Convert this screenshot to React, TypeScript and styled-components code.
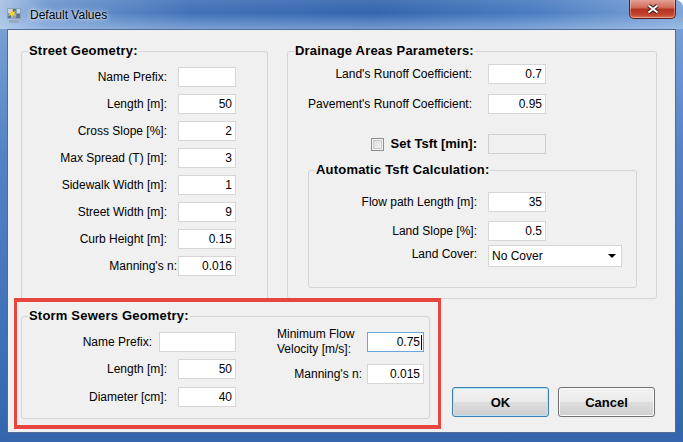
import React from "react";
import styled, { createGlobalStyle } from "styled-components";

const GlobalStyle = createGlobalStyle`
	html, body {
		margin: 0;
		padding: 0;
		background: #ffffff;
	}
	body {
		font-family: "Liberation Sans", Arial, sans-serif;
	}
`;

// window frame
const Window = styled.div`
	position: relative;
	width: 683px;
	height: 442px;
	overflow: hidden;
	display: flex;
	flex-direction: column;
	border-top-right-radius: 8px;
	background: linear-gradient(180deg, #7fa5d8 0%, #5383c4 35%, #3565ad 100%);
	font-family: "Liberation Sans", Arial, sans-serif;
	font-size: 12px;
	color: #000;
`;

const TitleBar = styled.div`
	height: 29px;
	display: flex;
	align-items: center;
	padding: 0 7px 0 6px;
	box-sizing: border-box;
	background: linear-gradient(
			180deg,
			rgba(255, 255, 255, 0.08) 0%,
			rgba(255, 255, 255, 0) 45%,
			rgba(190, 215, 245, 0.45) 100%
		),
		linear-gradient(90deg, #a9c3e4 0%, #6f98cf 7%, #4272b8 28%, #3466ae 55%, #4b7dc1 78%, #7ea4d6 100%);
`;

const TitleText = styled.span`
	margin-left: 8px;
	font-size: 12px;
	color: #000;
	text-shadow: 0 0 6px rgba(255, 255, 255, 0.95), 0 0 3px rgba(255, 255, 255, 0.8);
`;

const CloseButton = styled.div`
	margin-left: auto;
	align-self: flex-start;
	margin-top: -1px;
	width: 47px;
	height: 20px;
	box-sizing: border-box;
	display: flex;
	align-items: center;
	justify-content: center;
	border: 1px solid #5b201a;
	border-top: none;
	border-radius: 0 0 5px 5px;
	background: linear-gradient(180deg, #e6a89c 0%, #d0695a 45%, #b53220 55%, #c4452f 85%, #dd7a5e 100%);
	box-shadow: inset 0 0 0 1px rgba(255, 210, 200, 0.45);
`;

const Client = styled.div`
	margin: 0 7px;
	width: 669px;
	height: 404px;
	box-sizing: border-box;
	border: 1px solid #4d6d98;
	background: #f0f0f0;
	display: flex;
	flex-direction: column;
`;

// group boxes
const GroupBox = styled.fieldset<{ $w: number; $h: number }>`
	margin: 0;
	padding: 0;
	min-width: 0;
	width: ${(p) => p.$w}px;
	height: ${(p) => p.$h}px;
	box-sizing: border-box;
	border: 1px solid #d5d5d5;
	border-radius: 3px;
`;

const GroupTitle = styled.legend`
	margin-left: 6px;
	padding: 0 1px;
	font-size: 13px;
	font-weight: bold;
	letter-spacing: 0.2px;
	line-height: 14px;
`;

const TopRow = styled.div`
	display: flex;
	gap: 19px;
	padding: 14px 0 0 13px;
	align-items: flex-start;
`;

const BottomRow = styled.div`
	display: flex;
	align-items: flex-end;
	margin-top: 8px;
	padding-left: 13px;
`;

// fields
const FieldRow = styled.div<{ $gap: number; $mt?: number; $mr?: number }>`
	display: flex;
	align-items: center;
	justify-content: flex-end;
	gap: ${(p) => p.$gap}px;
	margin-top: ${(p) => p.$mt ?? 0}px;
	margin-right: ${(p) => p.$mr ?? 0}px;
	height: 20px;
`;

const Label = styled.span`
	white-space: nowrap;
	line-height: 14px;
`;

const BoldLabel = styled(Label)`
	font-size: 13px;
	font-weight: bold;
`;

const TextBox = styled.div<{ $w?: number; $focused?: boolean; $disabled?: boolean }>`
	width: ${(p) => p.$w ?? 58}px;
	height: 20px;
	box-sizing: border-box;
	display: flex;
	align-items: center;
	justify-content: flex-end;
	padding: 0 ${(p) => (p.$focused ? 1 : 3)}px 0 3px;
	border: 1px solid ${(p) => (p.$focused ? "#6aa4dc" : p.$disabled ? "#cfcfcf" : "#d6d6d6")};
	background: ${(p) => (p.$disabled ? "#f0f0f0" : "#ffffff")};
	white-space: nowrap;
`;

const Caret = styled.span`
	width: 1px;
	height: 15px;
	margin-left: 1px;
	background: #000;
`;

const CheckBox = styled.span`
	width: 13px;
	height: 13px;
	box-sizing: border-box;
	border: 1px solid #8e8f8f;
	background: linear-gradient(135deg, #dcdcdc 0%, #f4f4f4 100%);
	box-shadow: inset 0 0 0 1px #f4f4f4, inset 0 0 0 2px #c9c9c9;
`;

const CheckLabel = styled.label`
	display: flex;
	align-items: center;
	gap: 7px;
`;

const ControlCell = styled.div`
	width: 134px;
	display: flex;
`;

const DropDown = styled.div`
	width: 134px;
	height: 22px;
	box-sizing: border-box;
	display: flex;
	align-items: center;
	padding: 0 5px 0 3px;
	border: 1px solid #d6d6d6;
	background: #fff;
	margin-top: 3px;
`;

const DropText = styled.span`
	flex: 1;
`;

// street geometry
const StreetBody = styled.div`
	display: flex;
	flex-direction: column;
	gap: 7px;
	padding: 9px 31px 0 0;
`;

// drainage
const DrainageBody = styled.div`
	padding-top: 6px;
	display: flex;
	flex-direction: column;
`;

const AutoBox = styled(GroupBox)`
	margin: 9px 19px 0 20px;
`;

const AutoBody = styled.div`
	display: flex;
	flex-direction: column;
	padding: 15px 14px 0 0;
`;

// storm sewers
const StormBody = styled.div`
	display: flex;
	align-items: flex-start;
	padding-top: 4px;
`;

const StormLeft = styled.div`
	width: 214px;
	margin-top: 5px;
	display: flex;
	flex-direction: column;
	gap: 7px;
`;

const StormRight = styled.div`
	margin-left: 41px;
	display: grid;
	grid-template-columns: 85px 57px;
	align-content: start;
	column-gap: 5px;
	row-gap: 7px;
	align-items: center;
`;

const TwoLineLabel = styled.span`
	line-height: 15px;
	align-self: start;
`;

const RightLabel = styled(Label)`
	justify-self: end;
`;

const FocusCell = styled.div`
	align-self: start;
	margin-top: 5px;
`;

// buttons
const ButtonGroup = styled.div`
	display: flex;
	gap: 9px;
	margin: 0 0 2px 22px;
`;

const DialogButton = styled.button<{ $default?: boolean }>`
	width: 97px;
	height: 30px;
	padding: 0;
	border-radius: 3px;
	border: 1px solid ${(p) => (p.$default ? "#3c7fb1" : "#707070")};
	box-shadow: inset 0 0 0 1px ${(p) => (p.$default ? "#b9e3f7" : "#fbfbfb")};
	background: linear-gradient(180deg, #f2f2f2 0%, #ebebeb 48%, #dddddd 52%, #cfcfcf 100%);
	font-family: "Liberation Sans", Arial, sans-serif;
	font-size: 13px;
	font-weight: bold;
	color: #000;
`;

// annotation
const Highlight = styled.div`
	position: absolute;
	left: 14px;
	top: 298px;
	width: 427px;
	height: 131px;
	box-sizing: border-box;
	border-style: solid;
	border-color: #e8453e;
	border-width: 4px 3px;
	pointer-events: none;
`;

const AppIcon = () => (
	<svg width="16" height="18" viewBox="0 0 16 18">
		<rect x="1" y="2" width="14" height="11" fill="#8aa0bb" />
		<rect x="2" y="3" width="4" height="4" fill="#c9d6e6" />
		<rect x="7" y="3" width="3" height="4" fill="#5b7494" />
		<rect x="11" y="3" width="3" height="4" fill="#c9d6e6" />
		<rect x="2" y="8" width="3" height="4" fill="#5b7494" />
		<rect x="10" y="8" width="4" height="4" fill="#5b7494" />
		<path d="M6 2 L7 6 L10 5 L8 8 L11 10 L7 9 L6 13 L5 9 L2 10 L4 7 L2 5 L5 6 Z" fill="#f2d43a" />
		<rect x="3" y="14" width="10" height="3" fill="#9aa9bb" />
	</svg>
);

const CloseGlyph = () => (
	<svg width="14" height="10" viewBox="0 0 14 10">
		<path d="M2.5 1.5 L11.5 8.5 M11.5 1.5 L2.5 8.5" stroke="#3b1d18" strokeWidth="4" />
		<path d="M2.5 1.5 L11.5 8.5 M11.5 1.5 L2.5 8.5" stroke="#ffffff" strokeWidth="2" />
	</svg>
);

const Arrow = () => (
	<svg width="8" height="4" viewBox="0 0 8 4">
		<path d="M0 0 H8 L4 4 Z" fill="#000" />
	</svg>
);

const streetFields = [
	{ label: "Name Prefix:", value: "" },
	{ label: "Length [m]:", value: "50" },
	{ label: "Cross Slope [%]:", value: "2" },
	{ label: "Max Spread (T) [m]:", value: "3" },
	{ label: "Sidewalk Width [m]:", value: "1" },
	{ label: "Street Width [m]:", value: "9" },
	{ label: "Curb Height [m]:", value: "0.15" },
	{ label: "Manning's n:", value: "0.016", gap: 1 },
];

const App = (): JSX.Element => {
	return (
		<>
			<GlobalStyle />
			<Window>
				<TitleBar>
					<AppIcon />
					<TitleText>Default Values</TitleText>
					<CloseButton>
						<CloseGlyph />
					</CloseButton>
				</TitleBar>

				<Client>
					<TopRow>
						<GroupBox $w={247} $h={257}>
							<GroupTitle>Street Geometry:</GroupTitle>
							<StreetBody>
								{streetFields.map((f) => (
									<FieldRow key={f.label} $gap={f.gap ?? 11}>
										<Label>{f.label}</Label>
										<TextBox>{f.value}</TextBox>
									</FieldRow>
								))}
							</StreetBody>
						</GroupBox>

						<GroupBox $w={370} $h={255}>
							<GroupTitle>Drainage Areas Parameters:</GroupTitle>
							<DrainageBody>
								<FieldRow $gap={16} $mr={110}>
									<Label>Land's Runoff Coefficient:</Label>
									<TextBox>0.7</TextBox>
								</FieldRow>
								<FieldRow $gap={16} $mr={110} $mt={10}>
									<Label>Pavement's Runoff Coefficient:</Label>
									<TextBox>0.95</TextBox>
								</FieldRow>
								<FieldRow $gap={11} $mr={110} $mt={20}>
									<CheckLabel>
										<CheckBox />
										<BoldLabel>Set Tsft [min]:</BoldLabel>
									</CheckLabel>
									<TextBox $disabled />
								</FieldRow>

								<AutoBox $w={329} $h={125}>
									<GroupTitle>Automatic Tsft Calculation:</GroupTitle>
									<AutoBody>
										<FieldRow $gap={11}>
											<Label>Flow path Length [m]:</Label>
											<ControlCell>
												<TextBox>35</TextBox>
											</ControlCell>
										</FieldRow>
										<FieldRow $gap={11} $mt={9}>
											<Label>Land Slope [%]:</Label>
											<ControlCell>
												<TextBox>0.5</TextBox>
											</ControlCell>
										</FieldRow>
										<FieldRow $gap={11} $mt={3}>
											<Label>Land Cover:</Label>
											<DropDown>
												<DropText>No Cover</DropText>
												<Arrow />
											</DropDown>
										</FieldRow>
									</AutoBody>
								</AutoBox>
							</DrainageBody>
						</GroupBox>
					</TopRow>

					<BottomRow>
						<GroupBox $w={409} $h={110}>
							<GroupTitle>Storm Sewers Geometry:</GroupTitle>
							<StormBody>
								<StormLeft>
									<FieldRow $gap={7}>
										<Label>Name Prefix:</Label>
										<TextBox $w={77} />
									</FieldRow>
									<FieldRow $gap={11}>
										<Label>Length [m]:</Label>
										<TextBox>50</TextBox>
									</FieldRow>
									<FieldRow $gap={11} $mt={1}>
										<Label>Diameter [cm]:</Label>
										<TextBox>40</TextBox>
									</FieldRow>
								</StormLeft>

								<StormRight>
									<TwoLineLabel>
										Minimum Flow
										<br />
										Velocity [m/s]:
									</TwoLineLabel>
									<FocusCell>
										<TextBox $w={57} $focused>
											0.75
											<Caret />
										</TextBox>
									</FocusCell>
									<RightLabel>Manning's n:</RightLabel>
									<TextBox $w={57}>0.015</TextBox>
								</StormRight>
							</StormBody>
						</GroupBox>

						<ButtonGroup>
							<DialogButton $default>OK</DialogButton>
							<DialogButton>Cancel</DialogButton>
						</ButtonGroup>
					</BottomRow>
				</Client>

				<Highlight />
			</Window>
		</>
	);
};

export default App;
